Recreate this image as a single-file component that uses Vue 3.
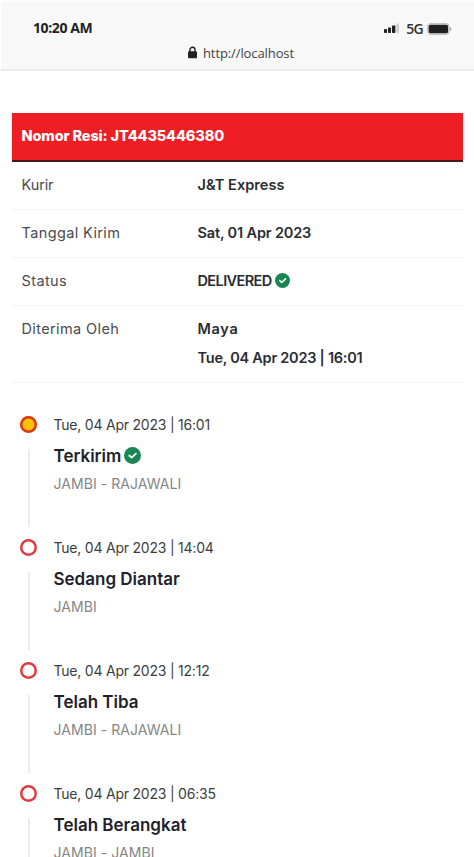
<script setup>
const rows = [
  { label: 'Kurir', values: ['J&T Express'], tone: 'kurir' },
  { label: 'Tanggal Kirim', values: ['Sat, 01 Apr 2023'], tone: 'tanggal' },
  { label: 'Status', values: ['DELIVERED'], check: true, tone: 'status' },
  { label: 'Diterima Oleh', values: ['Maya', 'Tue, 04 Apr 2023 | 16:01'], tone: 'terima' },
]
const events = [
  { time: 'Tue, 04 Apr 2023 | 16:01', title: 'Terkirim', place: 'JAMBI - RAJAWALI', done: true },
  { time: 'Tue, 04 Apr 2023 | 14:04', title: 'Sedang Diantar', place: 'JAMBI' },
  { time: 'Tue, 04 Apr 2023 | 12:12', title: 'Telah Tiba', place: 'JAMBI - RAJAWALI' },
  { time: 'Tue, 04 Apr 2023 | 06:35', title: 'Telah Berangkat', place: 'JAMBI - JAMBI' },
]
</script>

<template>
  <div class="screen">
    <header class="browser">
      <div class="statusbar">
        <span class="clock">10:20 AM</span>
        <div class="indicators">
          <svg class="signal" width="16" height="11" viewBox="0 0 16 11">
            <rect x="0" y="6" width="3" height="4" rx=".7" fill="#222" />
            <rect x="4" y="4.5" width="3" height="5.5" rx=".7" fill="#222" />
            <rect x="8" y="2.5" width="3.4" height="7.5" rx=".7" fill="#222" />
            <rect x="12.5" y="0.5" width="2.5" height="9.5" rx=".7" fill="#cfcfcf" />
          </svg>
          <span class="network">5G</span>
          <svg class="battery" width="25" height="12" viewBox="0 0 25 12">
            <rect x=".6" y=".6" width="21.6" height="10.8" rx="3" fill="#e4e4e4" stroke="#bbb" />
            <rect x="1.7" y="1.8" width="19.4" height="8.4" rx="1.6" fill="#1f1f1f" />
            <path d="M23 4.2q1.4.6 1.4 1.8T23 7.8z" fill="#999" />
          </svg>
        </div>
      </div>
      <div class="address">
        <svg class="lock" width="9" height="13" viewBox="0 0 9 13">
          <path d="M2 6V3.7a2.5 2.5 0 0 1 5 0V6" fill="none" stroke="#222" stroke-width="1.4" />
          <rect x="0" y="5.2" width="9" height="7" rx="1" fill="#222" />
        </svg>
        <span class="url">http://localhost</span>
      </div>
    </header>

    <main>
      <section class="details">
        <h1><span>Nomor Resi: JT4435446380</span></h1>
        <div v-for="row in rows" :key="row.label" class="row" :class="row.tone">
          <span class="label">{{ row.label }}</span>
          <div class="values">
            <div v-for="v in row.values" :key="v" class="value">
              <span>{{ v }}</span>
              <svg v-if="row.check" class="check" viewBox="0 0 16 16">
                <circle cx="8" cy="8" r="8" fill="#198754" />
                <path d="M5 8 7.2 10 11.2 6.3" fill="none" stroke="#fff" stroke-width="1.6" stroke-linecap="round" stroke-linejoin="round" />
              </svg>
            </div>
          </div>
        </div>
      </section>

      <ol class="timeline">
        <li v-for="e in events" :key="e.time">
          <div class="rail">
            <span class="dot" :class="{ active: e.done }"></span>
            <span class="line"></span>
          </div>
          <div class="event">
            <div class="time"><span>{{ e.time }}</span></div>
            <div class="title">
              <span>{{ e.title }}</span>
              <svg v-if="e.done" class="check" viewBox="0 0 16 16">
                <circle cx="8" cy="8" r="8" fill="#198754" />
                <path d="M5 8 7.2 10 11.2 6.3" fill="none" stroke="#fff" stroke-width="1.7" stroke-linecap="round" stroke-linejoin="round" />
              </svg>
            </div>
            <div class="place"><span>{{ e.place }}</span></div>
          </div>
        </li>
      </ol>
    </main>
  </div>
</template>

<style>
body { background: #fff; overflow: hidden; }
</style>
<style scoped>
.screen { height: 857px; overflow: hidden; box-sizing: border-box; background: #fff; color: #212529; font-family: Inter, "Liberation Sans", sans-serif; white-space: nowrap; }
.browser { box-sizing: border-box; height: 71px; background: #f8f8f8; border-top: 2px solid #fefefe; border-left: 1px solid #fff; border-bottom: 2px solid #ebebeb; font-family: "Open Sans", sans-serif; }
.statusbar { display: flex; justify-content: space-between; padding: 16px 22px 0 32px; height: 20px; line-height: 20px; }
.clock { font-size: 14px; font-weight: 700; letter-spacing: -.4px; color: #222; }
.indicators { display: flex; align-items: center; }
.signal { margin-right: 2px; }
.network { font-size: 14px; font-weight: 600; color: #333; margin: 2px 4px 0 4px; letter-spacing: -.7px; }
.battery { margin-top: 2px; }
.address { display: flex; justify-content: center; align-items: center; gap: 6px; margin-top: 6px; height: 18px; padding-left: 7px; }
.lock { margin-bottom: 1px; }
.url { font-size: 13px; letter-spacing: -.1px; color: #444; }
main { padding: 42px 11px 0 12px; }
h1 { box-sizing: border-box; height: 49px; margin: 0; padding: 0 9.5px 2px; display: flex; align-items: center; background: #ef1e25; border-bottom: 2px solid #48151a; color: #fff; font-size: 14.5px; font-weight: 800; letter-spacing: -.13px; }
.row { box-sizing: border-box; display: grid; grid-template-columns: 176px 1fr; height: 48px; padding: 8px 10px 0 9.5px; border-bottom: 1px solid #f4f4f5; font-size: 14.5px; line-height: 29px; }
.row.terima { height: 77px; }
.label { color: #4b4b50; font-weight: 400; letter-spacing: .38px; }
.kurir .label { letter-spacing: -.1px; }
.value { display: flex; align-items: center; gap: 4px; height: 29px; font-weight: 600; color: #292c32; letter-spacing: -.15px; }
.kurir .value { letter-spacing: .05px; }
.terima .value + .value { letter-spacing: -.25px; }
.terima .value:first-child { letter-spacing: .7px; }
.status .value { letter-spacing: -.6px; }
.value .check { width: 15px; height: 15px; margin: 0 0 1px -1px; }
.timeline { list-style: none; margin: 0; padding: 27px 0 0 8px; }
li { display: flex; height: 123px; }
.rail { width: 33.5px; display: flex; flex-direction: column; }
.dot { box-sizing: border-box; width: 17px; height: 17px; margin-top: 6px; box-shadow: inset 0 0 0 2.5px #e33a42; border-radius: 50%; background: #fff; }
.dot.active { background: #ffc107; box-shadow: inset 0 0 0 2.5px #dc3520; }
.line { width: 2px; height: 78px; margin: 16px 0 0 8px; background: #ececec; }
.event { line-height: 29px; }
.time { height: 29px; font-size: 14px; letter-spacing: -.22px; color: #3d3d40; }
.title { display: flex; align-items: center; gap: 4px; height: 34px; font-size: 17px; font-weight: 600; color: #20212a; }
.title .check { width: 17px; height: 17px; margin: 0 0 1px -1px; }
.place { height: 29px; margin-top: -4px; font-size: 14px; font-weight: 400; letter-spacing: .06px; color: #858585; }
</style>
